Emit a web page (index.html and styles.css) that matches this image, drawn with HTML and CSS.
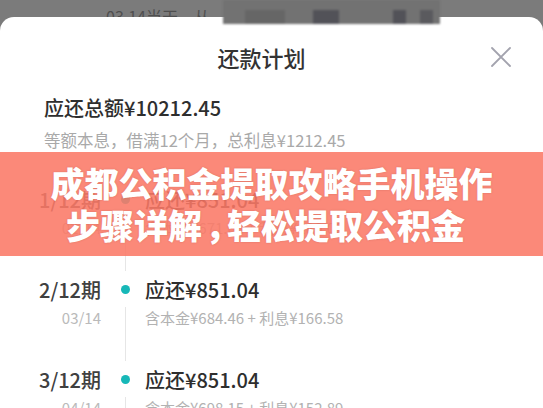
FILE: index.html
```html
<!DOCTYPE html>
<html lang="zh-CN">
<head>
    <meta charset="UTF-8">
    <meta name="viewport" content="width=device-width, initial-scale=1.0">
    <title>还款计划</title>
    <link rel="stylesheet" href="styles.css">
</head>
<body>
    <div class="fond">
        <p class="fond-texte">03.14当天，从</p>
    </div>

    <div class="feuille">
        <div class="entete">
            <span></span>
            <h1 class="titre">还款计划</h1>
            <svg class="fermer" width="20" height="20" viewBox="0 0 20 20">
                <path d="M1 1 L19 19 M19 1 L1 19" stroke="#a3a3ae" stroke-width="1.8" stroke-linecap="round" fill="none"/>
            </svg>
        </div>

        <div class="resume">
            <p class="total">应还总额¥10212.45</p>
            <p class="detail">等额本息，借满12个月，总利息¥1212.45</p>
        </div>

        <div class="periodes">
            <div class="periode">
                <div class="p-tete">
                    <span class="p-num">1/12期</span>
                    <span class="point"></span>
                    <span class="p-montant">应还¥851.04</span>
                </div>
                <div class="p-bas">
                    <span class="p-date">02/14</span>
                    <span class="trait"></span>
                    <span class="p-info">含本金¥671.04 + 利息¥180.00</span>
                </div>
            </div>
            <div class="periode">
                <div class="p-tete">
                    <span class="p-num">2/12期</span>
                    <span class="point"></span>
                    <span class="p-montant">应还¥851.04</span>
                </div>
                <div class="p-bas">
                    <span class="p-date">03/14</span>
                    <span class="trait"></span>
                    <span class="p-info">含本金¥684.46 + 利息¥166.58</span>
                </div>
            </div>
            <div class="periode">
                <div class="p-tete">
                    <span class="p-num">3/12期</span>
                    <span class="point"></span>
                    <span class="p-montant">应还¥851.04</span>
                </div>
                <div class="p-bas">
                    <span class="p-date">04/14</span>
                    <span class="trait"></span>
                    <span class="p-info">含本金¥698.15 + 利息¥152.89</span>
                </div>
            </div>
        </div>
    </div>

    <!-- zone floutee qui deborde sur la feuille -->
    <div class="masque">
        <span class="bloc b1"></span>
        <span class="bloc b2"></span>
        <span class="bloc b3"></span>
        <span class="bloc b4"></span>
    </div>

    <div class="bandeau">
        <div class="ligne">成都公积金提取攻略手机操作</div>
        <div class="ligne ligne-2">步骤详解<span class="virgule">，</span>轻松提取公积金</div>
    </div>
</body>
</html>
```

FILE: styles.css
```css
* {
    box-sizing: border-box;
}

body {
    margin: 0;
    height: 408px;
    overflow: hidden;
    background-color: #7b7b7b;
    font-family: "Noto Sans CJK SC", "Noto Sans", sans-serif;
    position: relative;
}

/* ecran derriere la feuille */
.fond {
    height: 17px;
    overflow: hidden;
}

.fond-texte {
    margin: 0;
    padding: 5px 0 0 106px;
    font-size: 16px;
    line-height: 22px;
    color: #4f4f4f;
}

.masque {
    position: absolute;
    left: 223px;
    top: 0;
    width: 217px;
    height: 24px;
    background-color: #727272;
    filter: blur(0.8px);
}

.bloc {
    position: absolute;
    top: 10px;
    height: 14px;
    background-color: #5c5c5c;
}

.b1 { left: 22px; width: 40px; background-color: #666; }
.b2 { left: 90px; width: 26px; background-color: #525258; }
.b3 { left: 170px; width: 13px; background-color: #525258; }
.b4 { left: 197px; width: 13px; background-color: #5a5a5e; }

.feuille {
    background-color: #fff;
    border-radius: 14px 14px 0 0;
    height: 391px;
    overflow: hidden;
    padding-left: 44px;
}

.entete {
    display: grid;
    grid-template-columns: 1fr auto 1fr;
    align-items: center;
    height: 79px;
    margin-left: -44px;
    padding-right: 20px;
}

.titre {
    margin: 0;
    font-size: 22px;
    font-weight: 500;
    color: #333;
}

.fermer {
    justify-self: end;
    margin-right: 12px;
}

.resume p {
    margin: 0;
}

.total {
    font-size: 20px;
    line-height: 24px;
    font-weight: 500;
    color: #2e2e2e;
}

.detail {
    margin-top: 8px !important;
    font-size: 16.5px;
    line-height: 24px;
    color: #a9a9a9;
}

.periodes {
    margin-top: 29px;
    margin-left: -44px;
}

.p-tete, .p-bas {
    display: grid;
    grid-template-columns: 101px 44px 1fr;
}

.p-tete {
    height: 36px;
    align-items: center;
}

.p-bas {
    height: 54px;
    align-items: start;
}

.p-num {
    text-align: right;
    font-size: 20px;
    font-weight: 500;
    color: #404040;
}

.point {
    width: 9px;
    height: 9px;
    margin-left: 20px;
    border-radius: 50%;
    background-color: #17b8b8;
}

.p-montant {
    font-size: 20px;
    font-weight: 500;
    color: #2e2e2e;
}

.p-date {
    text-align: right;
    font-size: 15px;
    line-height: 22px;
    color: #bababa;
}

.trait {
    align-self: stretch;
    width: 1px;
    margin-left: 24px;
    background-color: #e6e6e6;
}

.p-info {
    font-size: 15px;
    line-height: 22px;
    color: #b2b2b2;
}

/* bandeau titre par dessus */
.bandeau {
    position: absolute;
    left: 0;
    right: 0;
    top: 152px;
    height: 104px;
    display: flex;
    flex-direction: column;
    justify-content: center;
    align-items: center;
    background-color: rgba(250, 121, 103, 0.88);
}

.ligne {
    font-size: 34px;
    line-height: 42px;
    font-weight: 900;
    color: #fff;
    white-space: nowrap;
    text-shadow: 0 0 2px rgba(120, 40, 30, 0.25);
}

.ligne-2 {
    padding-right: 12px;
}

.virgule {
    margin-left: 3px;
    margin-right: -12px;
}
```
